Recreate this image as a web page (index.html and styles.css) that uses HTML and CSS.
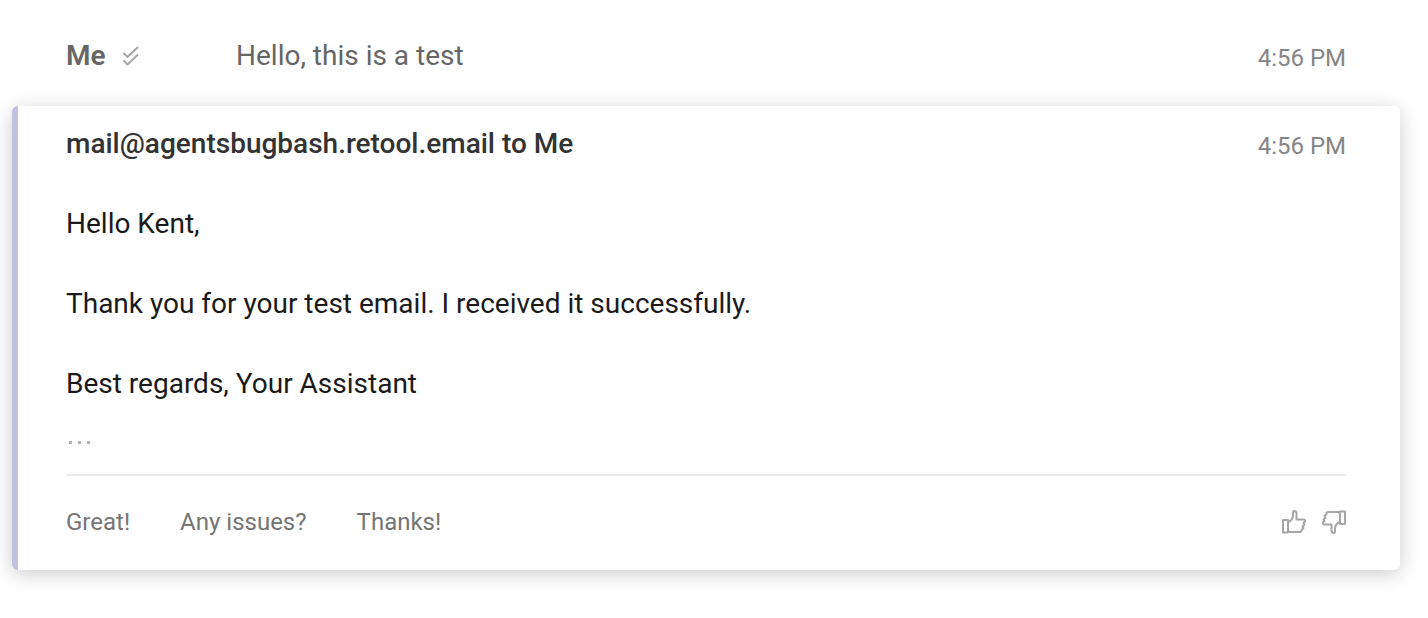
FILE: index.html
```
<!DOCTYPE html>
<html lang="en">
<head>
    <meta charset="UTF-8">
    <meta name="viewport" content="width=device-width, initial-scale=1.0">
    <title>Hello, this is a test</title>
    <link rel="stylesheet" href="styles.css">
</head>
<body>
    <main class="thread">
        <article class="message-collapsed">
            <div class="sender">
                <span class="sender-name">Me</span>
                <svg class="read-icon" viewBox="0 0 18 22" role="img" aria-label="Read">
                    <path d="M1.5 8 L5.5 12 L16 2"/>
                    <path d="M1.5 15.5 L5.5 19.5 L16 9.5"/>
                </svg>
            </div>
            <p class="snippet">Hello, this is a test</p>
            <time class="time">4:56 PM</time>
        </article>

        <article class="message-open">
            <header class="message-header">
                <h1 class="from">mail@agentsbugbash.retool.email to Me</h1>
                <time class="time">4:56 PM</time>
            </header>
            <div class="message-body">
                <p>Hello Kent,</p>
                <p>Thank you for your test email. I received it successfully.</p>
                <p>Best regards, Your Assistant</p>
            </div>
            <button class="expand" type="button" aria-label="Show trimmed content">
                <span class="dot"></span>
                <span class="dot"></span>
                <span class="dot"></span>
            </button>
            <footer class="message-footer">
                <div class="replies">
                    <button class="reply" type="button">Great!</button>
                    <button class="reply" type="button">Any issues?</button>
                    <button class="reply" type="button">Thanks!</button>
                </div>
                <div class="feedback">
                    <button class="thumb" type="button" aria-label="Good suggestions">
                        <svg viewBox="0 0 24 24">
                            <path d="M1 10H6V22.5H1Z"/>
                            <path d="M6 12C9 11 11 8 11 5V2.500Q11 1 12.500 1Q14.500 1 14.500 4V9.500H22Q23.500 10 23 11.500L21.500 13L22.500 14.500L20.500 16.500L21.500 18L19.500 20V21Q19 22 18 22H8L6 21"/>
                        </svg>
                    </button>
                    <button class="thumb thumb-down" type="button" aria-label="Bad suggestions">
                        <svg viewBox="0 0 24 24">
                            <path d="M1 10H6V22.5H1Z"/>
                            <path d="M6 12C9 11 11 8 11 5V2.500Q11 1 12.500 1Q14.500 1 14.500 4V9.500H22Q23.500 10 23 11.500L21.500 13L22.500 14.500L20.500 16.500L21.500 18L19.500 20V21Q19 22 18 22H8L6 21"/>
                        </svg>
                    </button>
                </div>
            </footer>
        </article>
    </main>
</body>
</html>
```

FILE: styles.css
```
* {
    box-sizing: border-box;
}
body {
    margin: 0;
    background-color: #fff;
    color: #1a1a1a;
    font-family: Roboto, "Liberation Sans", sans-serif;
    font-size: 28px;
    line-height: 40px;
}
h1, p {
    margin: 0;
}
button {
    padding: 0;
    border: none;
    background: none;
    color: inherit;
    font-family: inherit;
    cursor: pointer;
}
svg {
    display: block;
    fill: none;
    stroke: #a6a6a6;
    stroke-width: 2;
    stroke-linejoin: round;
}
.thread {
    padding: 12px 28px 48px 12px;
}
.message-collapsed {
    display: flex;
    align-items: center;
    padding: 24px 54px 30px;
    color: #666;
}
.sender {
    display: flex;
    align-items: center;
    gap: 16px;
    width: 170px;
}
.sender-name {
    font-weight: 600;
}
.read-icon {
    width: 18px;
    height: 22px;
}
.snippet {
    flex: 1;
}
.time {
    padding-top: 4px;
    color: #858585;
    font-size: 24px;
    line-height: 36px;
}
.message-open {
    padding: 18px 54px 28px 48px;
    border-left: 6px solid #bfc0e2;
    border-radius: 6px;
    background-color: #fff;
    box-shadow: 0 4px 20px rgba(0, 0, 0, 0.2);
}
.message-header {
    display: flex;
    align-items: center;
    justify-content: space-between;
}
.from {
    color: #333;
    font-size: 28px;
    font-weight: 500;
}
.message-body {
    display: grid;
    gap: 40px;
    padding-top: 40px;
}
.expand {
    display: flex;
    align-items: center;
    gap: 6px;
    height: 32px;
    margin: 22px 0 16px;
    padding: 0 3px;
}
.dot {
    width: 3px;
    height: 3px;
    background-color: #b3b3b3;
}
.message-footer {
    display: flex;
    align-items: center;
    justify-content: space-between;
    padding-top: 26px;
    border-top: 2px solid #ebebeb;
}
.replies {
    display: flex;
    gap: 50px;
}
.reply {
    color: #757575;
    font-size: 24px;
    line-height: 40px;
}
.feedback {
    display: flex;
    gap: 16px;
}
.thumb svg {
    width: 24px;
    height: 24px;
}
.thumb-down svg {
    transform: rotate(180deg);
}
```
